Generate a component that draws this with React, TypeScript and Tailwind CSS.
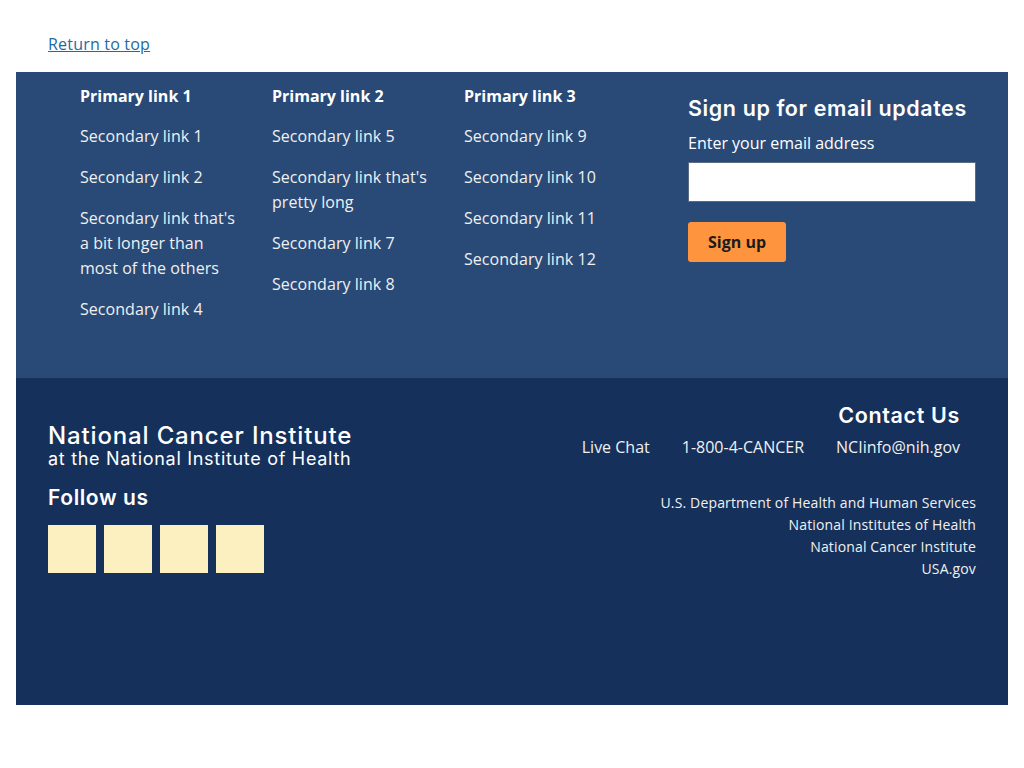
import React from 'react';

const columns = [
  { title: 'Primary link 1', links: ['Secondary link 1', 'Secondary link 2', "Secondary link that's a bit longer than most of the others", 'Secondary link 4'] },
  { title: 'Primary link 2', links: ['Secondary link 5', "Secondary link that's pretty long", 'Secondary link 7', 'Secondary link 8'] },
  { title: 'Primary link 3', links: ['Secondary link 9', 'Secondary link 10', 'Secondary link 11', 'Secondary link 12'] },
];

const agencies = ['U.S. Department of Health and Human Services', 'National Institutes of Health', 'National Cancer Institute', 'USA.gov'];

const heading = "font-['Inter',sans-serif]";

export default function App() {
  return (
    <div className="min-h-[768px] bg-white px-4 font-['Open_Sans',sans-serif] text-base">
      <div className="pt-[32px] pb-[16px] pl-8">
        <a href="#top" className="text-[#1d6aa6] underline leading-[24px] tracking-[0.2px]">Return to top</a>
      </div>

      <footer>
        <div className="flex bg-[#294a77] pl-16 pr-8 pt-3 pb-[56px] text-white">
          {columns.map(col => (
            <div key={col.title} className="w-[192px] pr-8">
              <a href="#" className="block font-bold leading-[24px]">{col.title}</a>
              <ul className="mt-4 flex flex-col gap-4">
                {col.links.map(link => (
                  <li key={link}>
                    <a href="#" className="block leading-[25px] text-[#f0f0f0] tracking-[0.05px]">{link}</a>
                  </li>
                ))}
              </ul>
            </div>
          ))}
          <div className="ml-8 flex-1 pt-3">
            <h2 className={`${heading} text-[21.5px] font-semibold leading-[24px] tracking-[0.6px]`}>Sign up for email updates</h2>
            <label htmlFor="email" className="mt-[11px] block leading-[24px]">Enter your email address</label>
            <input id="email" type="email" className="mt-[7px] block h-10 w-[288px] border border-[#5b6b84] bg-white" />
            <button className="mt-5 h-10 rounded-[3px] bg-[#ff943f] px-5 font-bold text-[#1b1b1b]">Sign up</button>
          </div>
        </div>

        <div className="flex h-[327px] justify-between bg-[#15305b] pl-8 pr-8 pt-[21px] text-white">
          <div className="pt-[24px]">
            <div className={`${heading} text-[24px] font-medium leading-[26px] tracking-[0.85px]`}>National Cancer Institute</div>
            <div className={`${heading} text-[18px] font-normal leading-[20px] tracking-[0.7px]`}>at the National Institute of Health</div>
            <h3 className={`${heading} mt-[14px] text-[21px] font-semibold leading-[30px] tracking-[0.6px]`}>Follow us</h3>
            <div className="mt-[12px] flex gap-2">
              {[0, 1, 2, 3].map(i => (
                <a key={i} href="#" className="block h-12 w-12 bg-[#fcf0c1]" aria-label="social" />
              ))}
            </div>
          </div>

          <div className="flex flex-col items-end pt-[1px]">
            <div className="flex flex-col items-end pr-4">
              <h3 className={`${heading} text-[21.5px] font-semibold leading-[30px] tracking-[0.65px]`}>Contact Us</h3>
              <div className="mt-[5px] flex gap-8 leading-[24px] text-[#f0f0f0]">
                <a href="#">Live Chat</a>
                <a href="#">1-800-4-CANCER</a>
                <a href="#">NCIinfo@nih.gov</a>
              </div>
            </div>
            <ul className="mt-[33px] flex flex-col items-end text-sm leading-[22px] text-[#f0f0f0] tracking-[0.15px]">
              {agencies.map(a => (
                <li key={a}><a href="#">{a}</a></li>
              ))}
            </ul>
          </div>
        </div>
      </footer>
    </div>
  );
}
